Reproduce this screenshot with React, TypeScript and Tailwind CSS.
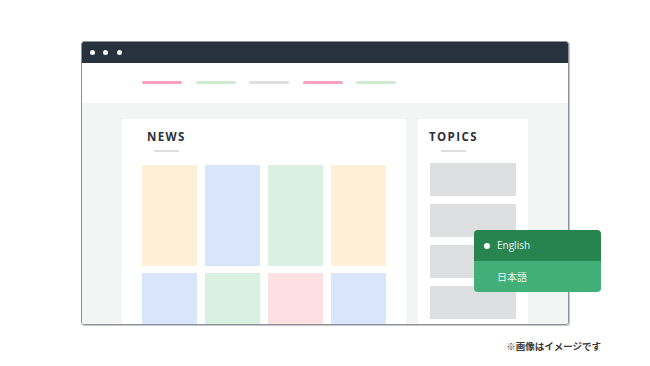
import React from 'react'

const NAV_BARS = ['#f7a1bd', '#cdeccf', '#dfdfe3', '#f7a1bd', '#cdeccf']

const TILES = [
  '#fef0d8', '#d9e5fb', '#d9f0e3', '#fef0d8',
  '#d9e5fb', '#d9f0e3', '#fde0e3', '#d9e5fb',
]

function Title({ children }: { children: React.ReactNode }) {
  return (
    <div className="inline-flex flex-col items-center">
      <span className="text-[11.5px] leading-[14px] font-bold tracking-[1.4px] text-[#28313d]">{children}</span>
      <span className="mt-[5.5px] w-[25px] h-[2px] bg-[#dcdde1]" />
    </div>
  )
}

export default function App() {
  return (
    <div
      className="relative w-[650px] h-[366px] bg-white overflow-hidden"
      style={{ fontFamily: '"Open Sans", "Noto Sans", "Noto Sans CJK JP", sans-serif' }}
    >
      <div className="pt-[41px] pl-[81px]">
        <div className="w-[488px] h-[284px] border border-[#8c9197] rounded-[3px] overflow-hidden flex flex-col shadow-[1px_1px_0_#c4c7cb]">
          {/* window bar */}
          <div className="shrink-0 h-[21px] bg-[#27323e] flex items-center gap-[8.5px] pl-[7.5px]">
            <span className="w-[5px] h-[5px] rounded-full bg-white" />
            <span className="w-[5px] h-[5px] rounded-full bg-white" />
            <span className="w-[5px] h-[5px] rounded-full bg-white" />
          </div>

          {/* header nav */}
          <div className="shrink-0 h-[40px] bg-white flex items-start pt-[18px] pl-[60px] gap-[13.5px]">
            {NAV_BARS.map((c, i) => (
              <span key={i} className="w-[40px] h-[3px] rounded-full" style={{ background: c }} />
            ))}
          </div>

          {/* body */}
          <div className="flex-1 min-h-0 overflow-hidden bg-[#f3f4f4] flex items-start pt-[16px] pl-[40px] gap-[12px]">
            <div className="shrink-0 w-[284px] h-[300px] bg-white pl-[20px] pt-[4px]">
              <div className="pl-[5px]">
                <Title>NEWS</Title>
              </div>
              <div className="mt-[13px] grid grid-cols-[repeat(4,55px)] auto-rows-[101px] gap-x-[8px] gap-y-[7px]">
                {TILES.map((c, i) => (
                  <div key={i} style={{ background: c }} />
                ))}
              </div>
            </div>

            <div className="shrink-0 w-[110px] h-[300px] bg-white pl-[12px] pt-[4px]">
              <div className="-ml-[1px]">
                <Title>TOPICS</Title>
              </div>
              <div className="mt-[11.5px] flex flex-col gap-[8px]">
                {[0, 1, 2, 3].map((i) => (
                  <div key={i} className="w-[86px] h-[33px] bg-[#dedfe1]" />
                ))}
              </div>
            </div>
          </div>
        </div>
      </div>

      {/* language dropdown */}
      <div className="absolute left-[474px] top-[230px] w-[127px] rounded-[4px] overflow-hidden text-[10px] text-[#eef7f1]">
        <div className="h-[31px] bg-[#27844f] flex items-center pl-[10px] gap-[7px]">
          <span className="w-[6px] h-[6px] rounded-full bg-white" />
          <span>English</span>
        </div>
        <div className="h-[31px] bg-[#42ae78] flex items-center pl-[23px]">
          <span style={{ fontFamily: '"Noto Sans CJK JP", sans-serif' }}>日本語</span>
        </div>
      </div>

      {/* footnote */}
      <div
        className="absolute right-[49px] top-[339px] text-[9.5px] leading-[14px] font-bold text-[#3a3a3a]"
        style={{ fontFamily: '"Noto Sans CJK JP", sans-serif' }}
      >
        ※画像はイメージです
      </div>
    </div>
  )
}
